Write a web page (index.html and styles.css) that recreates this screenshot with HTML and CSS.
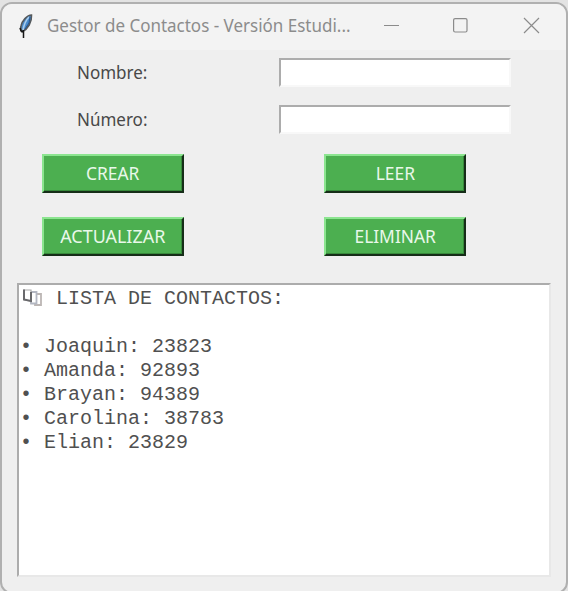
FILE: index.html
```html
<!DOCTYPE html>
<html lang="es">
<head>
<meta charset="utf-8">
<title>Gestor de Contactos</title>
<link rel="stylesheet" href="styles.css">
</head>
<body>
<main class="window">
  <header class="titlebar">
    <svg class="feather" width="16" height="26" viewBox="0 0 16 26">
      <path d="M13.500 3C9 3 4 9 3 14c-1 2 0 4 1 6 6-3 10-10 9.500-17z" fill="#498bcc" stroke="#55595c" stroke-width="1.6"/>
      <path d="M11 5C7 9 6 13 5 18" fill="none" stroke="#a9cceb" stroke-width="1.6"/>
      <path d="M12 5 11 11 7 17" fill="none" stroke="#27538a" stroke-width="1"/>
      <path d="M2 16l1 3 3 1M5.500 18v8" fill="none" stroke="#151515" stroke-width="1.5"/>
    </svg>
    <h1 class="title"><span>Gestor de Contactos - Versión Estudi...</span></h1>
    <svg class="controls" width="158" height="20" viewBox="0 0 158 20" fill="none" stroke="#8b8b8b" stroke-width="1.2">
      <path d="M1 10.5h15"/>
      <rect x="70.6" y="3.6" width="13.4" height="13.4" rx="1.5"/>
      <path d="m141 3 15 15m0-15-15 15"/>
    </svg>
  </header>
  <form class="form">
    <label class="label" for="nombre">Nombre:</label>
    <input class="entry" id="nombre">
    <label class="label" for="numero">Número:</label>
    <input class="entry" id="numero">
  </form>
  <section class="actions">
    <button class="button"><span>CREAR</span></button>
    <button class="button"><span>LEER</span></button>
    <button class="button"><span class="wide">ACTUALIZAR</span></button>
    <button class="button"><span>ELIMINAR</span></button>
  </section>
  <section class="list">
    <div class="heading">
      <svg class="books" width="22" height="22" viewBox="0 0 22 22" fill="#fff">
        <path d="M13 7h6v11h-6z" stroke="#bcb6b4" stroke-width="1.8"/>
        <path d="M8 5h6.500v11.500H9z" stroke="#b3b7c2" stroke-width="1.8"/>
        <path d="M2 3h7v11l-7-1z" stroke="#aaa" stroke-width="1.2"/>
        <path d="M2 2.500V12.500l7 1.500V5" fill="none" stroke="#69696c" stroke-width="2"/>
      </svg>
      <span>LISTA DE CONTACTOS:</span>
    </div>
    <ul class="contacts">
      <li><i>•</i>Joaquin: 23823</li>
      <li><i>•</i>Amanda: 92893</li>
      <li><i>•</i>Brayan: 94389</li>
      <li><i>•</i>Carolina: 38783</li>
      <li><i>•</i>Elian: 23829</li>
    </ul>
  </section>
</main>
</body>
</html>
```
FILE: styles.css
```css
* { box-sizing: border-box; }
body {
  margin: 0;
  height: 591px;
  padding-top: 2px;
  overflow: hidden;
  background: #e3e3e3;
  font-family: "Noto Sans", "Open Sans", sans-serif;
}
.window {
  height: 592px;
  border: 2px solid #b0b0b0;
  border-radius: 12px;
  background: #efefef;
  overflow: hidden;
}
.titlebar {
  display: flex;
  height: 46px;
  background: #f3f3f3;
}
.feather { margin: 8px 0 0 16px; flex: none; }
.title {
  width: 305px;
  margin: 8px 0 0 13px;
  font-size: 18px;
  line-height: 26px;
  font-weight: 400;
  color: #8c8c8c;
  white-space: nowrap;
}
.title span { display: inline-block; transform: scaleX(.944); transform-origin: left; }
.controls { margin: 11px 0 0 31px; flex: none; }
.form {
  display: grid;
  grid-template-columns: 202px 232px;
  grid-auto-rows: 29px;
  row-gap: 18px;
  padding: 8px 0 0 75px;
}
.label {
  line-height: 29px;
  font-size: 18px;
  color: #484848;
  transform: scaleX(.945);
  transform-origin: left;
}
.entry {
  width: 232px;
  height: 29px;
  padding: 0;
  border: 2px solid;
  border-color: #acacac #f8f8f8 #f8f8f8 #acacac;
  background: #fff;
}
.actions {
  display: grid;
  grid-template-columns: 142px 142px;
  column-gap: 140px;
  row-gap: 24px;
  padding: 20px 0 0 40px;
}
.button {
  height: 39px;
  padding: 0;
  border: 2px solid;
  border-color: #8ce590 #162d18 #162d18 #8ce590;
  background: #4caf50;
  box-shadow: inset -1px -1px #378a3b;
  color: #e9f8ea;
  font: 18px/35px "Noto Sans", sans-serif;
}
.button span { display: inline-block; transform: scaleX(.965); }
.button .wide { margin: 0 -4px; transform: scaleX(.995); }
.list {
  width: 534px;
  height: 294px;
  margin: 27px 0 0 15px;
  border: 2px solid;
  border-color: #acacac #e8e8e8 #e8e8e8 #acacac;
  background: #fff;
  font: 20px/24px "Liberation Mono", monospace;
  color: #505050;
  padding: 2px 0 0 3px;
}
.heading { display: flex; height: 48px; }
.heading span { margin-left: 12px; }
.contacts { list-style: none; margin: 0; padding: 0; }
.contacts i { display: inline-block; width: 22px; font-style: normal; text-indent: -2px; }
```
